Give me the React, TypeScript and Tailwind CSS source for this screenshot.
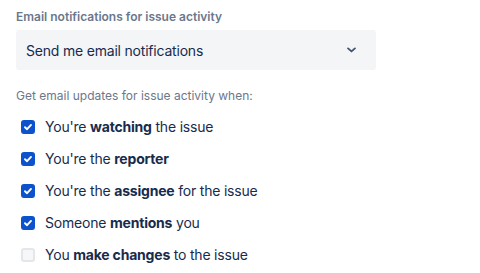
import React from 'react'

const CheckIcon = () => (
  <svg viewBox="0 0 14 14" className="w-[14px] h-[14px]">
    <path d="M4 7.2 L6.1 9.2 L10 4.9" fill="none" stroke="white" strokeWidth="1.9" strokeLinecap="round" strokeLinejoin="round" />
  </svg>
)

// 一行选项
const OptionRow: React.FC<{ checked: boolean; children: React.ReactNode }> = ({ checked, children }) => (
  <label className="flex items-center h-8 cursor-pointer pl-[5px]">
    {checked ? (
      <span className="w-[14px] h-[14px] rounded-[3px] bg-[#0c52cc] flex items-center justify-center">
        <CheckIcon />
      </span>
    ) : (
      <span className="w-[14px] h-[14px] rounded-[3px] bg-[#f6f7f9] border-2 border-[#e4e6ea]" />
    )}
    <span className="ml-[10px] text-[14px] leading-5 tracking-[-0.2px] text-[#172b4d]">{children}</span>
  </label>
)

export default function App() {
  return (
    <div
      className="w-[480px] h-[273px] bg-white pl-4 overflow-hidden"
      style={{ fontFamily: 'Inter, "Noto Sans", sans-serif' }}
    >
      <div className="pt-[9px] text-[12px] leading-4 font-semibold text-[#6b778c]">
        Email notifications for issue activity
      </div>
      <div className="mt-[5px] w-[360px] h-10 rounded-[3px] bg-[#f4f5f7] flex items-center justify-between pl-[10px] pr-[20px]">
        <span className="text-[14px] tracking-[-0.2px] text-[#172b4d]">Send me email notifications</span>
        <svg viewBox="0 0 10 6" className="w-[9px] h-[6px]">
          <path d="M1.2 1.2 L5 4.6 L8.8 1.2" fill="none" stroke="#42526e" strokeWidth="2" strokeLinecap="round" strokeLinejoin="round" />
        </svg>
      </div>
      <div className="mt-[18px] text-[12px] leading-4 text-[#6b778c]">
        Get email updates for issue activity when:
      </div>
      <div className="mt-[7px] flex flex-col">
        <OptionRow checked>
          You're <b className="font-bold">watching</b> the issue
        </OptionRow>
        <OptionRow checked>
          You're the <b className="font-bold">reporter</b>
        </OptionRow>
        <OptionRow checked>
          You're the <b className="font-bold">assignee</b> for the issue
        </OptionRow>
        <OptionRow checked>
          Someone <b className="font-bold">mentions</b> you
        </OptionRow>
        <OptionRow checked={false}>
          You <b className="font-bold">make changes</b> to the issue
        </OptionRow>
      </div>
    </div>
  )
}
